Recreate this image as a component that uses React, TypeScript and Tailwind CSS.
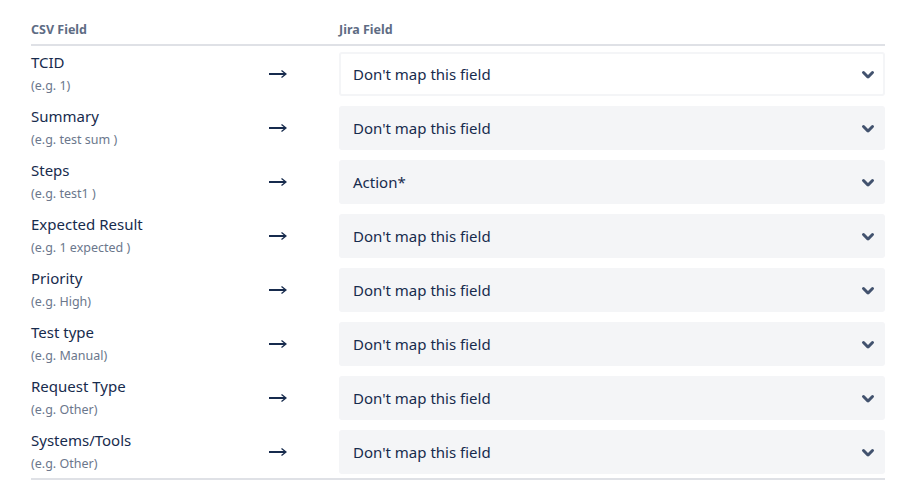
import React from "react";

const rows = [
  { label: "TCID", hint: "(e.g. 1)", value: "Don't map this field", active: true },
  { label: "Summary", hint: "(e.g. test sum )", value: "Don't map this field" },
  { label: "Steps", hint: "(e.g. test1 )", value: "Action*" },
  { label: "Expected Result", hint: "(e.g. 1 expected )", value: "Don't map this field" },
  { label: "Priority", hint: "(e.g. High)", value: "Don't map this field" },
  { label: "Test type", hint: "(e.g. Manual)", value: "Don't map this field" },
  { label: "Request Type", hint: "(e.g. Other)", value: "Don't map this field" },
  { label: "Systems/Tools", hint: "(e.g. Other)", value: "Don't map this field" },
];

function Chevron() {
  return (
    <svg width="36" height="36" viewBox="0 0 24 24" className="-mr-[15px]">
      <path
        fill="#42526e"
        d="M8.292 10.293a1.009 1.009 0 000 1.419l2.939 2.965c.218.215.5.322.779.322s.556-.107.769-.322l2.93-2.955a1.01 1.01 0 000-1.419.987.987 0 00-1.406 0l-2.298 2.317-2.307-2.327a.99.99 0 00-1.406 0z"
      />
    </svg>
  );
}

function Arrow() {
  return (
    <svg width="18" height="10" viewBox="0 0 18 10">
      <line x1="0" y1="5" x2="16" y2="5" stroke="#172b4d" strokeWidth="2" />
      <path d="M12.5 1.5 L17 5 L12.5 8.5" fill="none" stroke="#172b4d" strokeWidth="1.4" />
    </svg>
  );
}

export default function App() {
  return (
    <div
      className="w-[912px] h-[504px] bg-white pl-[31px] pr-[27px]"
      style={{ fontFamily: '"Noto Sans", "Open Sans", sans-serif' }}
    >
      <div className="grid grid-cols-[238px_70px_1fr] border-b-2 border-[#dfe1e6] pt-[22px] pb-[6px] text-[12.5px] leading-[16px] font-bold text-[#5e6c84]">
        <div>CSV Field</div>
        <div></div>
        <div>Jira Field</div>
      </div>
      <div className="border-b-2 border-[#dfe1e6]">
        {rows.map((r, i) => (
          <div key={i} className="grid grid-cols-[238px_70px_1fr] h-[54px]">
            <div className="pt-[5px]">
              <div className="text-[15px] leading-[22px] text-[#172b4d]">{r.label}</div>
              <div className="mt-[5px] text-[12.5px] leading-[16px] text-[#6b778c]">{r.hint}</div>
            </div>
            <div className="pt-[23px]">
              <Arrow />
            </div>
            <div className="pt-[6px]">
              <div
                className={
                  "h-[44px] rounded-[3px] border-2 border-[#f4f5f7] pl-3 pr-3 flex items-center justify-between text-[15px] text-[#172b4d] " +
                  (r.active ? "bg-white" : "bg-[#f4f5f7]")
                }
              >
                <span>{r.value}</span>
                <Chevron />
              </div>
            </div>
          </div>
        ))}
      </div>
    </div>
  );
}
